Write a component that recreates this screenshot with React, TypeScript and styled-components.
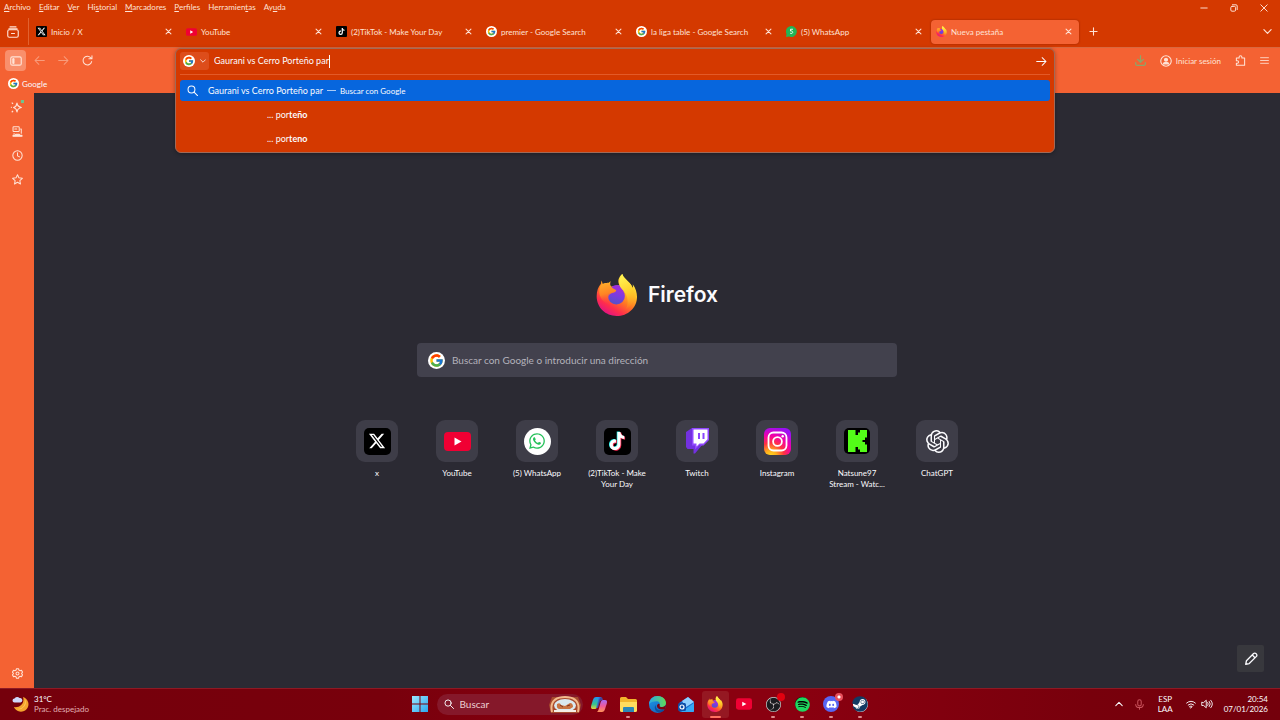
import React from "react";
import styled, { createGlobalStyle, css } from "styled-components";
import { FaSpotify, FaDiscord, FaSteam, FaWhatsapp, FaTiktok, FaXTwitter } from "react-icons/fa6";
import { FcGoogle } from "react-icons/fc";
import { SiOpenai, SiObsstudio } from "react-icons/si";

const color = {
  frame: "#d43900",
  toolbar: "#f46233",
  page: "#2b2a33",
  field: "#42414d",
  tile: "#3e3d48",
  select: "#0766dd",
  text: "#fbfbfe",
  warm: "#ffe3d6",
};

const GlobalStyle = createGlobalStyle`
  * { box-sizing: border-box; }
  body { margin: 0; background: ${color.page}; }
  body, button, input { font-family: Lato, "Open Sans", sans-serif; }
  button { border: 0; padding: 0; margin: 0; background: none; color: inherit; font-size: 8px; line-height: 12px; }
  a { color: inherit; text-decoration: none; }
  svg { display: block; flex: none; }
`;

const Window = styled.div`
  min-height: 100vh;
  display: flex;
  flex-direction: column;
  color: ${color.text};
  font-size: 8px;
  line-height: 12px;
`;

/* ---------- title area ---------- */

const Header = styled.header`
  background: ${color.frame};
  color: ${color.warm};
`;

const MenuRow = styled.div`
  display: flex;
  justify-content: space-between;
  height: 16px;
`;

const Menus = styled.nav`
  display: flex;
  gap: 8px;
  padding: 1px 4px;
`;

const MenuItem = styled.button`
  height: 12px;
  u { text-underline-offset: 1px; }
`;

const WindowControls = styled.div`
  display: flex;
  gap: 20px;
  padding: 3px 11px 0 0;
`;

const IconButton = styled.button<{ $w?: number; $h?: number; $bg?: string; $dim?: boolean }>`
  display: flex;
  align-items: center;
  justify-content: center;
  flex: none;
  width: ${(p) => p.$w ?? 10}px;
  height: ${(p) => p.$h ?? 10}px;
  border-radius: 4px;
  background: ${(p) => p.$bg ?? "transparent"};
  opacity: ${(p) => (p.$dim ? 0.45 : 1)};
`;

const TabRow = styled.div`
  display: flex;
  align-items: center;
  height: 31px;
  padding-right: 8px;
`;

const TabViewCell = styled.div`
  display: flex;
  align-items: center;
  justify-content: center;
  width: 29px;
  height: 27px;
  margin-right: 2px;
  padding-right: 2px;
  border-right: 1px solid #e2622f;
`;

const Tabs = styled.div`
  display: flex;
  gap: 2px;
  min-width: 0;
`;

const TabBox = styled.div<{ $active?: boolean }>`
  display: flex;
  align-items: center;
  gap: 4px;
  width: 148px;
  height: 24px;
  padding: 0 6px 0 5px;
  border-radius: 4px;
  ${(p) =>
    p.$active &&
    css`
      background: ${color.toolbar};
      box-shadow: 0 0 2px rgba(80, 10, 0, 0.5);
    `}
`;

const TabLabel = styled.button`
  display: flex;
  align-items: center;
  gap: 4px;
  flex: 1;
  min-width: 0;
  white-space: nowrap;
  text-align: left;
`;

const Grow = styled.div`
  flex: 1;
`;

/* ---------- navigation area ---------- */

const NavBar = styled.div`
  display: grid;
  grid-template-columns: 175px 1fr 225px;
  height: 28px;
  background: ${color.toolbar};
  border-top: 1px solid #d9683f;
  color: ${color.warm};
`;

const NavGroup = styled.div<{ $end?: boolean }>`
  display: flex;
  align-items: center;
  justify-content: ${(p) => (p.$end ? "flex-end" : "flex-start")};
  gap: ${(p) => (p.$end ? 14 : 3)}px;
  padding: 0 ${(p) => (p.$end ? 11 : 5)}px 2px;
`;

const Account = styled.button`
  display: flex;
  align-items: center;
  gap: 4px;
  white-space: nowrap;
`;

const UrlSlot = styled.div`
  position: relative;
`;

const UrlPanel = styled.div`
  position: absolute;
  z-index: 2;
  top: 0;
  left: 0;
  right: 0;
  padding: 0 4px 1px;
  border: 1px solid #a06a58;
  border-radius: 6px;
  background: ${color.frame};
  color: ${color.text};
  font-size: 9px;
  box-shadow: 0 1px 4px rgba(0, 0, 0, 0.3);
`;

const UrlRow = styled.div`
  display: flex;
  align-items: center;
  height: 26px;
  padding: 0 4px 1px 0;
  border-bottom: 1px solid #e35a28;
`;

const EngineButton = styled.button`
  display: flex;
  align-items: center;
  gap: 5px;
  width: 29px;
  height: 18px;
  padding: 0 3px;
  margin-right: 5px;
  border-radius: 3px;
  background: #dd4d1b;
`;

const UrlInput = styled.input`
  field-sizing: content;
  border: 0;
  padding: 0;
  outline: 0;
  background: none;
  color: ${color.text};
  font-size: 9px;
  line-height: 14px;
`;

const Caret = styled.span`
  width: 1px;
  height: 13px;
  background: ${color.text};
`;

const Suggestions = styled.ul`
  list-style: none;
  margin: 0;
  padding: 5px 0 0;
`;

const Suggestion = styled.li<{ $selected?: boolean }>`
  display: flex;
  align-items: center;
  height: ${(p) => (p.$selected ? 21 : 24)}px;
  margin-bottom: ${(p) => (p.$selected ? 2 : 0)}px;
  padding-left: ${(p) => (p.$selected ? 7 : 87)}px;
  border-radius: 3px;
  background: ${(p) => (p.$selected ? color.select : "transparent")};
  white-space: pre;
  svg { margin-right: 10px; }
`;

const Dash = styled.span`
  width: 9px;
  height: 1px;
  margin: 0 4px;
  background: #a9caf6;
`;

const Hint = styled.span`
  font-size: 8px;
`;

const Bookmarks = styled.div`
  display: flex;
  height: 18px;
  padding: 0 8px 1px;
  background: ${color.toolbar};
`;

const Bookmark = styled.a`
  display: flex;
  align-items: center;
  gap: 3px;
`;

/* ---------- page ---------- */

const Body = styled.div`
  flex: 1;
  display: flex;
`;

const Sidebar = styled.aside`
  display: flex;
  flex-direction: column;
  align-items: center;
  gap: 12px;
  width: 34px;
  padding: 8px 0 9px;
  background: ${color.toolbar};
  color: ${color.warm};
`;

const Page = styled.main`
  flex: 1;
  display: flex;
  flex-direction: column;
  align-items: center;
  padding: 180px 16px 16px;
  background: ${color.page};
`;

const Brand = styled.h1`
  display: flex;
  align-items: center;
  gap: 10px;
  height: 44px;
  margin: 0 0 26px;
  font: 600 21px/28px Inter, "Open Sans", sans-serif;
`;

const SearchForm = styled.form`
  display: flex;
  align-items: center;
  gap: 7px;
  width: 480px;
  max-width: 100%;
  height: 34px;
  padding: 0 11px;
  border-radius: 4px;
  background: ${color.field};
`;

const SearchInput = styled.input`
  flex: 1;
  min-width: 0;
  border: 0;
  padding: 0;
  outline: 0;
  background: none;
  color: ${color.text};
  font-size: 10px;
  line-height: 16px;
  &::placeholder { color: #b3b2bb; opacity: 1; }
`;

const Sites = styled.div`
  display: flex;
  justify-content: center;
  margin-top: 43px;
`;

const Site = styled.a`
  display: flex;
  flex-direction: column;
  align-items: center;
  width: 80px;
  gap: 6px;
  text-align: center;
  line-height: 11px;
  white-space: pre-line;
`;

const Tile = styled.span`
  display: flex;
  align-items: center;
  justify-content: center;
  width: 42px;
  height: 42px;
  border-radius: 9px;
  background: ${color.tile};
`;

const Badge = styled.span<{ $size: number; $bg: string; $r: string }>`
  display: flex;
  align-items: center;
  justify-content: center;
  flex: none;
  width: ${(p) => p.$size}px;
  height: ${(p) => p.$size}px;
  border-radius: ${(p) => p.$r};
  background: ${(p) => p.$bg};
  color: #fff;
`;

const EditButton = styled.button`
  display: flex;
  align-items: center;
  justify-content: center;
  align-self: flex-end;
  width: 27px;
  height: 27px;
  margin-top: auto;
  border-radius: 2px;
  background: #38383d;
`;

/* ---------- taskbar ---------- */

const Taskbar = styled.footer`
  display: grid;
  grid-template-columns: 1fr auto 1fr;
  align-items: center;
  height: 32px;
  padding-bottom: 1px;
  border-top: 1px solid #8c1a24;
  background: linear-gradient(90deg, #75000c 0, #78000c 30%, #8a0010 50%, #8a0010 62%, #78000c 85%, #74000c 100%);
`;

const Weather = styled.div`
  display: flex;
  align-items: center;
  gap: 5px;
  padding-left: 12px;
  line-height: 10px;
  p { margin: 0; }
  span { color: #e0aeb2; }
`;

const Apps = styled.div`
  display: flex;
  align-items: center;
  padding-left: 4px;
`;

const AppButton = styled.button<{ $state?: "open" | "active" }>`
  position: relative;
  display: flex;
  align-items: center;
  justify-content: center;
  width: 27px;
  height: 27px;
  margin: 0 1px;
  border-radius: 3px;
  background: ${(p) => (p.$state === "active" ? "#951822" : "transparent")};
  &::after {
    content: "";
    display: ${(p) => (p.$state ? "block" : "none")};
    position: absolute;
    bottom: 0;
    width: ${(p) => (p.$state === "active" ? 11 : 4)}px;
    height: 2px;
    border-radius: 1px;
    background: ${(p) => (p.$state === "active" ? "#ff7161" : "#dc8a8c")};
  }
`;

const Dot = styled.span<{ $c: string }>`
  position: absolute;
  top: 2px;
  right: 2px;
  width: 8px;
  height: 8px;
  border-radius: 50%;
  background: ${(p) => p.$c};
`;

const TaskSearch = styled.label`
  display: flex;
  align-items: center;
  gap: 6px;
  width: 146px;
  height: 21px;
  margin: 0 2px 0 7px;
  padding: 0 2px 0 7px;
  border-radius: 11px;
  background: #85182a;
  input::placeholder { color: #ebcfd3; }
`;

const Tray = styled.div`
  display: flex;
  align-items: center;
  justify-content: flex-end;
  padding-right: 12px;
  line-height: 10px;
`;

const TrayGroup = styled.div`
  display: flex;
  gap: 11px;
`;

const TrayText = styled.div<{ $end?: boolean }>`
  margin: ${(p) => (p.$end ? "0 0 0 6px" : "0 13px")};
  text-align: ${(p) => (p.$end ? "right" : "center")};
  white-space: pre-line;
`;

/* ---------- drawings ---------- */

type LineProps = { size?: number; box?: number; w?: number; stroke?: string; children: React.ReactNode };
const Line = ({ size = 11, box = 16, w = 1.5, stroke = "currentColor", children }: LineProps) => (
  <svg width={size} height={size} viewBox={`0 0 ${box} ${box}`} fill="none" stroke={stroke} strokeWidth={w} strokeLinecap="round" strokeLinejoin="round">
    {children}
  </svg>
);

const Close = () => <Line size={7} box={10} w={1.5}><path d="M1.5 1.5l7 7M8.5 1.5l-7 7" /></Line>;

const Firefox = ({ size, id }: { size: number; id: string }) => (
  <svg width={size} height={size} viewBox="0 0 124 128">
    <defs>
      <linearGradient id={id + "a"} x1=".85" y1=".1" x2=".3" y2="1">
        <stop offset="0" stopColor="#fff04a" />
        <stop offset=".3" stopColor="#ffc126" />
        <stop offset=".55" stopColor="#ff7a22" />
        <stop offset=".8" stopColor="#ff2d4c" />
        <stop offset="1" stopColor="#e01286" />
      </linearGradient>
      <linearGradient id={id + "b"} x1=".7" y1="0" x2=".4" y2="1">
        <stop offset="0" stopColor="#a030dc" />
        <stop offset=".5" stopColor="#7a3ce0" />
        <stop offset="1" stopColor="#5352c6" />
      </linearGradient>
      <linearGradient id={id + "c"} x1=".3" y1="0" x2=".5" y2="1">
        <stop offset="0" stopColor="#ffab2a" />
        <stop offset=".5" stopColor="#ff8424" />
        <stop offset="1" stopColor="#ff4040" stopOpacity="0" />
      </linearGradient>
      <linearGradient id={id + "d"} x1=".5" y1="0" x2=".7" y2="1">
        <stop offset="0" stopColor="#fff352" />
        <stop offset=".5" stopColor="#ffd02c" />
        <stop offset="1" stopColor="#ff9a20" stopOpacity="0" />
      </linearGradient>
    </defs>
    <path fill={`url(#${id}a)`} d="M78 0C82 12 92 18 101 28c5 6 8 12 9 17 1-5 1-9 0-14 9 12 13 26 13 38 0 34-28 59-62 59S0 102 0 68c0-16 5-29 13-38 0-4 1-7 3-10 0 5 2 9 4 12 5-3 11-5 17-5 1-2 3-4 6-5-3 7-2 12 1 16l26-4c-8-12-2-26 8-34z" />
    <circle cx="60" cy="67" r="26" fill={`url(#${id}b)`} />
    <path fill="#9a2fdc" d="M42 46c4-11 20-16 33-9 9 4 14 12 15 20-6-4-11-5-17-4-8-5-20-7-31-7z" />
    <path fill={`url(#${id}c)`} d="M13 33c8-6 18-7 25-4 2 8 8 14 21 20 2 3-2 7-8 8-9 2-14 6-15 12-1 9 3 18 12 23-20 2-38-14-40-36 0-8 1-17 5-23z" />
    <path fill={`url(#${id}d)`} d="M78 0C82 12 92 18 101 28c14 16 18 36 11 54-5 13-14 21-24 26 8-12 9-29 2-45-5-12-20-18-21-34 0-12 3-21 9-29z" />
  </svg>
);

const XMark = ({ size }: { size: number }) => (
  <Badge $size={size} $bg="#000" $r={size > 20 ? "5px" : "1px"}>
    <FaXTwitter size={size > 20 ? 18 : 9} />
  </Badge>
);

const YouTube = ({ w, h }: { w: number; h: number }) => (
  <svg width={w} height={h} viewBox="0 0 27 19">
    <rect width="27" height="19" rx="4" fill="#f00033" />
    <path d="M10.500 5.500l7 4-7 4z" fill="#fff" />
  </svg>
);

const TikTok = ({ size }: { size: number }) => {
  const big = size > 20;
  const note = "M12.500 0h3.300c.2 2.500 1.800 4.200 4.200 4.500v3.300c-1.600 0-3-.5-4.200-1.300v7.100c0 8.300-11.800 8.500-11.800.5 0-3.800 3.300-6.300 6.800-5.700v3.500c-1.800-.6-3.400.4-3.400 2.200 0 3.400 5.100 3.300 5.100-.6z";
  return (
    <Badge $size={size} $bg="#000" $r={big ? "5px" : "1px"}>
      {big ? (
        <svg width="20" height="20" viewBox="1 -1 22 22">
          <path d={note} fill="#25f4ee" transform="translate(-.8 -.5)" />
          <path d={note} fill="#fe2c55" transform="translate(.9 .7)" />
          <path d={note} fill="#fff" />
        </svg>
      ) : (
        <FaTiktok size={7} />
      )}
    </Badge>
  );
};

const Google = ({ size }: { size: number }) => (
  <Badge $size={size} $bg="#fff" $r="50%">
    <FcGoogle size={size - 2} />
  </Badge>
);

const Twitch = () => (
  <svg width="23" height="26" viewBox="0 0 23 26">
    <path d="M0 4l6-4v13l3 3 0 4 8-4-8 9.500H7.500V21H1.500L0 19z" fill="#7331e0" />
    <path d="M6 0h17v12l-5.500 5.500h-4L9 21.500v-4H6z" fill="#9147ff" />
    <path d="M7.500 1.500h14v9.700L17.500 15.500h-4L10.500 18.500v-3h-3z" fill="#fff" />
    <path d="M12 5h2v6h-2zM16.500 5h2v6h-2z" fill="#8a45ff" />
  </svg>
);

const Instagram = () => (
  <svg width="27" height="27" viewBox="0 0 27 27">
    <defs>
      <radialGradient id="ig" cx=".25" cy="1.05" r="1.1">
        <stop offset="0" stopColor="#ffdd22" />
        <stop offset=".2" stopColor="#ffb01c" />
        <stop offset=".45" stopColor="#ff3440" />
        <stop offset=".7" stopColor="#f400a8" />
        <stop offset="1" stopColor="#9a10f5" />
      </radialGradient>
    </defs>
    <rect width="27" height="27" rx="6" fill="url(#ig)" />
    <g fill="none" stroke="#fff" strokeWidth="1.800">
      <rect x="4.500" y="4.500" width="18" height="18" rx="5" />
      <circle cx="13.500" cy="13.500" r="4.400" />
    </g>
    <circle cx="18.700" cy="8.300" r="1.200" fill="#fff" />
  </svg>
);

const Kick = () => (
  <Badge $size={26} $bg="#000" $r="5px">
    <svg width="19" height="22" viewBox="0 0 19 22">
      <path fill="#53fc18" d="M0 0h7.500v5H10V2.500h2V0h7v7.500h-2V10h-2.500v2H17v2.500h2V22h-7v-2.500h-2V17H7.500v5H0z" />
    </svg>
  </Badge>
);

const Search = ({ size }: { size: number }) => (
  <Line size={size} w={1.500}><circle cx="6.500" cy="6.500" r="5" /><path d="M10.300 10.300l5 5" /></Line>
);

const Chevron = ({ size = 8, up = false }: { size?: number; up?: boolean }) => (
  <Line size={size} box={10} w={1.300}><path d={up ? "M1 7l4-4 4 4" : "M1 3l4 4 4-4"} /></Line>
);

const Moon = () => (
  <svg width="17" height="16" viewBox="0 0 17 16">
    <path d="M11 1a7.500 7.500 0 1 1-9 10C8 12 13 7 11 1z" fill="#f5a52e" />
    <path d="M13 3a7 7 0 0 1-8 10c6 0 9-5 8-10z" fill="#ffc959" />
    <path d="M2.500 6.500a2 2 0 0 1 0-4 3 3 0 0 1 5-.5 2.300 2.300 0 0 1 1 4.500z" fill="#cfd8fb" />
  </svg>
);

const WindowsLogo = () => (
  <svg width="16" height="16" viewBox="0 0 16 16">
    <defs><linearGradient id="wn" x2="1" y2="1"><stop stopColor="#9be8ff" /><stop offset="1" stopColor="#2ba6ee" /></linearGradient></defs>
    <path fill="url(#wn)" d="M0 0h7.500v7.500H0zM8.500 0H16v7.500H8.500zM0 8.500h7.500V16H0zM8.500 8.500H16V16H8.500z" />
  </svg>
);

const SearchArt = () => (
  <svg width="32" height="17" viewBox="0 0 32 17">
    <path d="M3 1h26l3 8-2 8H2L0 9z" fill="#a84a2c" />
    <path d="M3 16C0 3 10 1 16 1s16 2 13 15" fill="none" stroke="#f3b98c" strokeWidth="2" />
    <ellipse cx="16" cy="9.500" rx="11" ry="6.500" fill="#d9e9f0" />
    <path d="M8 8q3-2 4 1l4 1 5-3q3 0 3 4l-3 2H11q-4 0-3-5z" fill="#c87543" />
    <path d="M11 9l3 2M18 10l3-1" stroke="#7d3524" fill="none" />
    <path d="M5 14h22v2H5z" fill="#f4eee6" />
  </svg>
);

const Copilot = () => (
  <svg width="16" height="15" viewBox="0 0 16 15">
    <defs>
      <linearGradient id="cpa" y2="1" x2="0"><stop stopColor="#2294f5" /><stop offset=".6" stopColor="#37c390" /><stop offset="1" stopColor="#e6d23a" /></linearGradient>
      <linearGradient id="cpb" y2="1" x2="0"><stop stopColor="#a66cf5" /><stop offset=".5" stopColor="#f0589a" /><stop offset="1" stopColor="#ff9457" /></linearGradient>
    </defs>
    <path d="M5 0h5c-1.500 1-2 4-3 7.500S5.500 12 4 12H2C-1 12 0 9 1 6s1.500-6 4-6z" fill="url(#cpa)" />
    <path d="M11 15H6c1.500-1 2-4 3-7.500S10.500 3 12 3h2c3 0 2 3 1 6s-1.500 6-4 6z" fill="url(#cpb)" />
    <path d="M8 0h2c1 0 1.500 1 2 3-2 0-3 1-3.500 3L7 11H5z" fill="#2a62d8" opacity=".7" />
  </svg>
);

const Folder = () => (
  <svg width="17" height="15" viewBox="0 0 17 15">
    <path d="M0 1.500Q0 0 1.500 0H6l2 2h7.500Q17 2 17 3.500V14H0z" fill="#f2b52c" />
    <path d="M0 5h17v8.500Q17 15 15.500 15h-14Q0 15 0 13.500z" fill="#ffdc5e" />
    <path d="M4 10h9q1 0 1 1v4H3v-4q0-1 1-1z" fill="#2b87b8" />
  </svg>
);

const Edge = () => (
  <svg width="17" height="17" viewBox="0 0 16 16">
    <defs>
      <linearGradient id="eda" x2="1"><stop stopColor="#2ba8e8" /><stop offset="1" stopColor="#62d956" /></linearGradient>
      <linearGradient id="edb" y2="1" x2=".5"><stop stopColor="#1c9deb" /><stop offset="1" stopColor="#1668c0" /></linearGradient>
    </defs>
    <circle cx="8" cy="8" r="8" fill="url(#edb)" />
    <path d="M0 8C0 3 4 0 8 0c5 0 8 3.500 8 6.500 0 2.500-2 4-4 4-1.500 0-2.500-.6-2-1.500C11 7 9.500 5 7 5 4 5 1 6 0 8z" fill="url(#eda)" />
    <path d="M6.500 8c-1 4 2.500 6.500 7.500 5l.6-.3C12 17 5 16.500 5.500 10z" fill="#0c4f9c" />
    <path d="M10 9c-.5 1 1 1.600 2.500 1.400 1.500 0 3-1 3.400-2.400.1 2-.4 3.500-1.200 4.500-4 1-7.200-.5-7.200-3 0-1 .6-1.800 1.200-2.200C9.600 7 10.500 8 10 9z" fill="#7b0210" />
  </svg>
);

const Outlook = () => (
  <svg width="16" height="15" viewBox="0 0 16 15">
    <path d="M1 6l9-6 6 5v9q0 1-1 1H3q-2 0-2-2z" fill="#1a6fd0" />
    <path d="M4 4l6-4 6 5-8 5z" fill="#8fd0ff" />
    <path d="M3 15l13-9v8q0 1-1 1z" fill="#37a8f4" />
    <rect y="6" width="8" height="8" rx="1.500" fill="#0f4fa8" />
    <circle cx="4" cy="10" r="2" fill="none" stroke="#fff" strokeWidth="1.200" />
  </svg>
);

const WhatsTab = () => (
  <svg width="11" height="11" viewBox="0 0 22 22" aria-hidden="true">
    <path d="M11 0a11 11 0 1 1-5 21L0 22l1-6A11 11 0 0 1 11 0z" fill="#22b455" />
    <path d="M14 6.500H9v3.500c5-1 6 5 1.500 5-1.500 0-2-.5-2.500-1" stroke="#fff" strokeWidth="1.800" fill="none" />
  </svg>
);

/* ---------- data ---------- */

const menus = [["", "A", "rchivo"], ["", "E", "ditar"], ["", "V", "er"], ["Hi", "s", "torial"], ["", "M", "arcadores"], ["", "P", "erfiles"], ["Herramien", "t", "as"], ["Ay", "u", "da"]];

const tabs = [
  { icon: <XMark size={11} />, title: "Inicio / X" },
  { icon: <YouTube w={11} h={8} />, title: "YouTube" },
  { icon: <TikTok size={11} />, title: "(2)TikTok - Make Your Day" },
  { icon: <Google size={11} />, title: "premier - Google Search" },
  { icon: <Google size={11} />, title: "la liga table - Google Search" },
  { icon: <WhatsTab />, title: "(5) WhatsApp" },
  { icon: <Firefox size={11} id="ft" />, title: "Nueva pestaña", active: true },
];

const sites = [
  { icon: <XMark size={27} />, name: "x" },
  { icon: <YouTube w={27} h={19} />, name: "YouTube" },
  { icon: <Badge $size={27} $bg="#fff" $r="50%"><FaWhatsapp size={18} color="#25c15a" /></Badge>, name: "(5) WhatsApp" },
  { icon: <TikTok size={27} />, name: "(2)TikTok - Make\nYour Day" },
  { icon: <Twitch />, name: "Twitch" },
  { icon: <Instagram />, name: "Instagram" },
  { icon: <Kick />, name: "Natsune97\nStream - Watc..." },
  { icon: <SiOpenai size={23} />, name: "ChatGPT" },
];

const apps: { name: string; icon: React.ReactNode; state?: "open" | "active"; dot?: string }[] = [
  { name: "Copilot", icon: <Copilot /> },
  { name: "Explorador", icon: <Folder />, state: "open" },
  { name: "Edge", icon: <Edge /> },
  { name: "Outlook", icon: <Outlook /> },
  { name: "Firefox", icon: <Firefox size={16} id="fk" />, state: "active" },
  { name: "YouTube", icon: <YouTube w={16} h={12} /> },
  { name: "OBS", icon: <Badge $size={15} $bg="#1c1c20" $r="50%"><SiObsstudio size={15} color="#d6cccc" /></Badge>, state: "open", dot: "#e2000f" },
  { name: "Spotify", icon: <Badge $size={14} $bg="#000" $r="50%"><FaSpotify size={15} color="#1fd760" /></Badge>, state: "open" },
  { name: "Discord", icon: <Badge $size={16} $bg="#5865f2" $r="50%"><FaDiscord size={11} /></Badge>, state: "open", dot: "radial-gradient(#fff 0 1px, #e8505c 2px)" },
  { name: "Steam", icon: <Badge $size={15} $bg="#fff" $r="50%"><FaSteam size={16} color="#123a63" /></Badge>, state: "open" },
];

export default function App() {
  return (
    <Window>
      <GlobalStyle />
      <Header>
        <MenuRow>
          <Menus>
            {menus.map(([a, k, b]) => (
              <MenuItem key={a + k + b}>{a}<u>{k}</u>{b}</MenuItem>
            ))}
          </Menus>
          <WindowControls>
            <IconButton aria-label="Minimizar"><Line size={8} box={10} w={1.200}><path d="M1 5h8" /></Line></IconButton>
            <IconButton aria-label="Restaurar"><Line size={8} box={10} w={1.200}><rect x="1" y="3" width="6" height="6" rx="1.500" /><path d="M3 1h4.500Q9 1 9 2.500V7" /></Line></IconButton>
            <IconButton aria-label="Cerrar ventana"><Line size={8} box={10} w={1.200}><path d="M1 1l8 8M9 1l-8 8" /></Line></IconButton>
          </WindowControls>
        </MenuRow>
        <TabRow>
          <TabViewCell>
            <IconButton aria-label="Vista de Firefox" $w={14} $h={14}>
              <Line size={12}><path d="M4 1.200h8M2.500 3.800h11" /><rect x="1" y="5" width="14" height="10" rx="2" /><path d="M6 10h4" /></Line>
            </IconButton>
          </TabViewCell>
          <Tabs>
            {tabs.map((t) => (
              <TabBox key={t.title} $active={t.active}>
                <TabLabel>{t.icon}{t.title}</TabLabel>
                <IconButton aria-label="Cerrar pestaña"><Close /></IconButton>
              </TabBox>
            ))}
          </Tabs>
          <IconButton aria-label="Nueva pestaña" $w={28} $h={20}><Line size={9} box={10} w={1.200}><path d="M5 1v8M1 5h8" /></Line></IconButton>
          <Grow />
          <IconButton aria-label="Lista de pestañas"><Chevron size={9} /></IconButton>
        </TabRow>
      </Header>

      <NavBar>
        <NavGroup>
          <IconButton aria-label="Barra lateral" $w={21} $h={21} $bg="#f98f6c">
            <Line size={12}><rect x="1" y="2.500" width="14" height="11" rx="2" /><path d="M4.500 5.500v5" strokeWidth="3" /></Line>
          </IconButton>
          <IconButton aria-label="Atrás" $w={21} $h={21} $dim><Line size={11}><path d="M15 8H1.500M7 2.500L1.500 8 7 13.500" /></Line></IconButton>
          <IconButton aria-label="Adelante" $w={21} $h={21} $dim><Line size={11}><path d="M1 8h13.500M9 2.500L14.500 8 9 13.500" /></Line></IconButton>
          <IconButton aria-label="Recargar" $w={21} $h={21}><Line size={11}><path d="M14 9.500A6.300 6.300 0 1 1 12.500 3.800L14 5.300M14.500 1v4.500H10" /></Line></IconButton>
        </NavGroup>
        <UrlSlot>
          <UrlPanel>
            <UrlRow>
              <EngineButton aria-label="Motor de búsqueda"><Google size={12} /><Chevron size={6} /></EngineButton>
              <UrlInput aria-label="Dirección" defaultValue="Gaurani vs Cerro Porteño par" />
              <Caret />
              <Grow />
              <IconButton aria-label="Ir"><Line size={11}><path d="M1 8h13.500M9 2.500L14.500 8 9 13.500" /></Line></IconButton>
            </UrlRow>
            <Suggestions>
              <Suggestion $selected>
                <Search size={11} />Gaurani vs Cerro Porteño par<Dash /><Hint>Buscar con Google</Hint>
              </Suggestion>
              <Suggestion>{"... por"}<b>teño</b></Suggestion>
              <Suggestion>{"... por"}<b>teno</b></Suggestion>
            </Suggestions>
          </UrlPanel>
        </UrlSlot>
        <NavGroup $end>
          <IconButton aria-label="Descargas"><Line size={11} stroke="#8aa66b" w={1.800}><path d="M8 1v9M4 6.500l4 4 4-4M1 11v2q0 2 2 2h10q2 0 2-2v-2" /></Line></IconButton>
          <Account>
            <Line size={12}><circle cx="8" cy="8" r="7" /><circle cx="8" cy="6.300" r="2" fill="currentColor" /><path d="M4.500 12q0-2 2-2h3q2 0 2 2z" fill="currentColor" /></Line>
            Iniciar sesión
          </Account>
          <IconButton aria-label="Extensiones"><Line size={11}><path d="M2 6V4.500h4V3a2 2 0 0 1 4 0v1.500h4V15H2v-3h1.500a1.500 1.500 0 0 0 0-3.500H2z" /></Line></IconButton>
          <IconButton aria-label="Menú"><Line size={9}><path d="M1 3h14M1 8h14M1 13h14" /></Line></IconButton>
        </NavGroup>
      </NavBar>
      <Bookmarks>
        <Bookmark href="#google"><Google size={11} />Google</Bookmark>
      </Bookmarks>

      <Body>
        <Sidebar>
          <IconButton aria-label="Chatbot de IA" $h={12}>
            <svg width="14" height="14" viewBox="0 0 16 16" fill="none" stroke="currentColor" strokeWidth="1.300" strokeLinejoin="round">
              <path d="M8 3.500Q8.500 7.500 13 8.500 8.500 9.500 8 13.500 7.500 9.500 4 8.500 7.500 7.500 8 3.500z" />
              <path d="M2 3l1.500 1.500M2 14l1.500-1.500M1 8.500h1" />
              <path d="M12.500 0H16v3.500h-3.500z" fill="#6fc48d" stroke="none" />
            </svg>
          </IconButton>
          <IconButton aria-label="Pestañas de otros dispositivos" $h={12}>
            <Line size={11}><rect x="1.500" y="1" width="9" height="7" rx="1" /><path d="M4 4.500h3M12.500 4.500h1v6M3 11v1" /><path d="M1.500 13.500h3l1-1.500h5l1 1.500h3v1.500h-13z" fill="currentColor" /></Line>
          </IconButton>
          <IconButton aria-label="Historial" $h={12}><Line size={11}><circle cx="8" cy="8" r="6.800" /><path d="M8 4v4.500l3 1.500" /></Line></IconButton>
          <IconButton aria-label="Marcadores" $h={12}><Line size={11}><path d="M8 1l2.100 4.600 5 .6-3.700 3.400 1 5L8 12.100l-4.400 2.500 1-5L.9 6.200l5-.6z" /></Line></IconButton>
          <Grow />
          <IconButton aria-label="Ajustes" $h={12}>
            <Line size={11}><circle cx="8" cy="8" r="2.200" /><path d="M6.500 1h3l.5 2 1.800 1 2-.6 1.500 2.600L13.900 8l1.400 2-1.500 2.600-2-.6-1.800 1-.5 2h-3L6 13l-1.800-1-2 .6L.7 10l1.400-2L.7 6l1.500-2.600 2 .6L6 3z" /></Line>
          </IconButton>
        </Sidebar>
        <Page>
          <Brand><Firefox size={42} id="fb" />Firefox</Brand>
          <SearchForm onSubmit={(e) => e.preventDefault()}>
            <Google size={17} />
            <SearchInput aria-label="Buscar" placeholder="Buscar con Google o introducir una dirección" />
          </SearchForm>
          <Sites>
            {sites.map((s) => (
              <Site key={s.name} href="#site"><Tile>{s.icon}</Tile>{s.name}</Site>
            ))}
          </Sites>
          <EditButton aria-label="Personalizar"><Line size={14}><path d="M2 14l.8-4L11 1.800a1.800 1.800 0 0 1 2.600 0l.6.600a1.800 1.800 0 0 1 0 2.600L6 13.200zM9.500 3.500l3 3" /></Line></EditButton>
        </Page>
      </Body>

      <Taskbar>
        <Weather><Moon /><div><p>31°C</p><span>Prac. despejado</span></div></Weather>
        <Apps>
          <IconButton aria-label="Inicio" $w={20} $h={27}><WindowsLogo /></IconButton>
          <TaskSearch>
            <Search size={10} />
            <SearchInput aria-label="Buscar en Windows" placeholder="Buscar" />
            <SearchArt />
          </TaskSearch>
          {apps.map((a) => (
            <AppButton key={a.name} aria-label={a.name} $state={a.state}>
              {a.icon}
              {a.dot && <Dot $c={a.dot} />}
            </AppButton>
          ))}
        </Apps>
        <Tray>
          <TrayGroup>
            <IconButton aria-label="Iconos ocultos"><Chevron up /></IconButton>
            <IconButton aria-label="Micrófono"><Line size={11} stroke="#c9525c"><rect x="5.500" y="1" width="5" height="9" rx="2.500" /><path d="M2.500 8q0 4.500 5.500 4.500T13.500 8M8 12.500V15" /></Line></IconButton>
          </TrayGroup>
          <TrayText>{"ESP\nLAA"}</TrayText>
          <IconButton aria-label="Wi-Fi"><Line size={10}><path d="M1 6.500q7-6 14 0M3.500 9.500q4.500-4 9 0M6 12q2-1.500 4 0L8 14z" /></Line></IconButton>
          <IconButton aria-label="Volumen" $w={22}><Line size={12} w={1.200}><path d="M1 6v4h2.500L7 13V3L3.500 6zM9 6q1.500 2 0 4M11 4.500q3 3.500 0 7M13 3q4.500 5 0 10" /></Line></IconButton>
          <TrayText $end>{"20:54\n07/01/2026"}</TrayText>
        </Tray>
      </Taskbar>
    </Window>
  );
}
